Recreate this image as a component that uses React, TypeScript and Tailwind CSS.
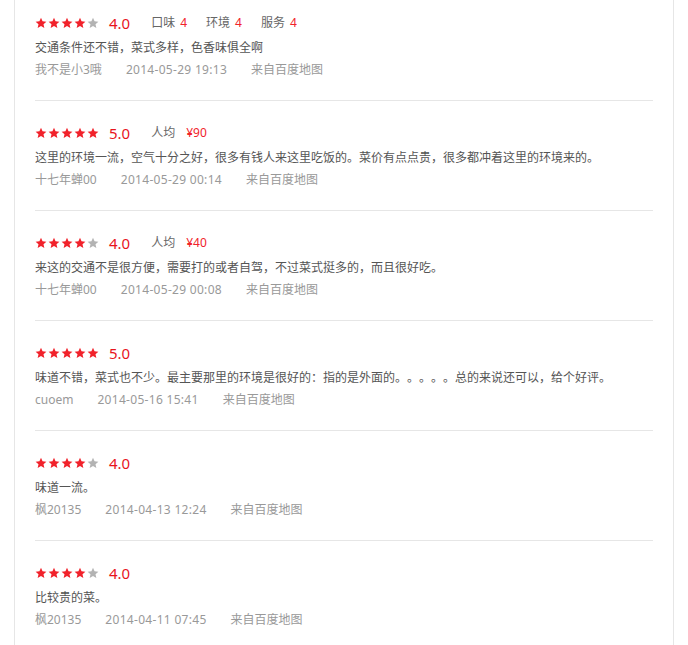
import React from "react";

type Review = {
  rating: number;
  extra?: React.ReactNode;
  text: string;
  user: string;
  date: string;
};

const Star = ({ on }: { on: boolean }) => (
  <svg width="12" height="12" viewBox="0 0 24 24" className="block">
    <polygon
      points="12,1.5 15.1,8.6 22.8,9.3 17,14.4 18.7,22 12,18 5.3,22 7,14.4 1.2,9.3 8.9,8.6"
      fill={on ? "#f1222b" : "#b3b3b3"}
    />
  </svg>
);

const Stars = ({ n }: { n: number }) => (
  <div className="flex items-center gap-[1px]">
    {[0, 1, 2, 3, 4].map((i) => (
      <Star key={i} on={i < n} />
    ))}
  </div>
);

const reviews: Review[] = [
  {
    rating: 4,
    extra: (
      <div className="ml-[21px] flex items-center text-[12px] text-[#666]">
        <span>口味</span>
        <span className="ml-[5px] text-[#f1222b]">4</span>
        <span className="ml-[19px]">环境</span>
        <span className="ml-[5px] text-[#f1222b]">4</span>
        <span className="ml-[19px]">服务</span>
        <span className="ml-[5px] text-[#f1222b]">4</span>
      </div>
    ),
    text: "交通条件还不错，菜式多样，色香味俱全啊",
    user: "我不是小3哦",
    date: "2014-05-29 19:13",
  },
  {
    rating: 5,
    extra: (
      <div className="ml-[21px] flex items-center text-[12px] text-[#666]">
        <span>人均</span>
        <span className="ml-[11px] text-[#f1222b]">¥90</span>
      </div>
    ),
    text: "这里的环境一流，空气十分之好，很多有钱人来这里吃饭的。菜价有点点贵，很多都冲着这里的环境来的。",
    user: "十七年蝉00",
    date: "2014-05-29 00:14",
  },
  {
    rating: 4,
    extra: (
      <div className="ml-[21px] flex items-center text-[12px] text-[#666]">
        <span>人均</span>
        <span className="ml-[11px] text-[#f1222b]">¥40</span>
      </div>
    ),
    text: "来这的交通不是很方便，需要打的或者自驾，不过菜式挺多的，而且很好吃。",
    user: "十七年蝉00",
    date: "2014-05-29 00:08",
  },
  {
    rating: 5,
    text: "味道不错，菜式也不少。最主要那里的环境是很好的：指的是外面的。。。。。总的来说还可以，给个好评。",
    user: "cuoem",
    date: "2014-05-16 15:41",
  },
  {
    rating: 4,
    text: "味道一流。",
    user: "枫20135",
    date: "2014-04-13 12:24",
  },
  {
    rating: 4,
    text: "比较贵的菜。",
    user: "枫20135",
    date: "2014-04-11 07:45",
  },
];

export default function App() {
  return (
    <div
      className="w-[688px] h-[645px] overflow-hidden bg-white [text-spacing-trim:space-all]"
      style={{ fontFamily: '"Noto Sans", "Noto Sans CJK SC", sans-serif' }}
    >
      <div className="ml-[14px] w-[660px] min-h-[645px] border-x border-[#e6e6e6] px-[20px]">
        {reviews.map((r, i) => (
          <div
            key={i}
            className="border-b border-[#e6e6e6] pt-[22px] pb-[20px] first:pt-[13px]"
          >
            <div className="flex h-[20px] items-center">
              <Stars n={r.rating} />
              <span className="ml-[10px] text-[15px] leading-[20px] text-[#e8141d]">
                {r.rating.toFixed(1)}
              </span>
              {r.extra}
            </div>
            <div className="mt-[5px] text-[12px] leading-[20px] text-[#555] whitespace-nowrap">
              {r.text}
            </div>
            <div className="mt-[2px] flex text-[12px] leading-[20px] text-[#999]">
              <span>{r.user}</span>
              <span className="ml-[24px] tracking-[0.3px]">{r.date}</span>
              <span className="ml-[24px]">来自百度地图</span>
            </div>
          </div>
        ))}
      </div>
    </div>
  );
}
